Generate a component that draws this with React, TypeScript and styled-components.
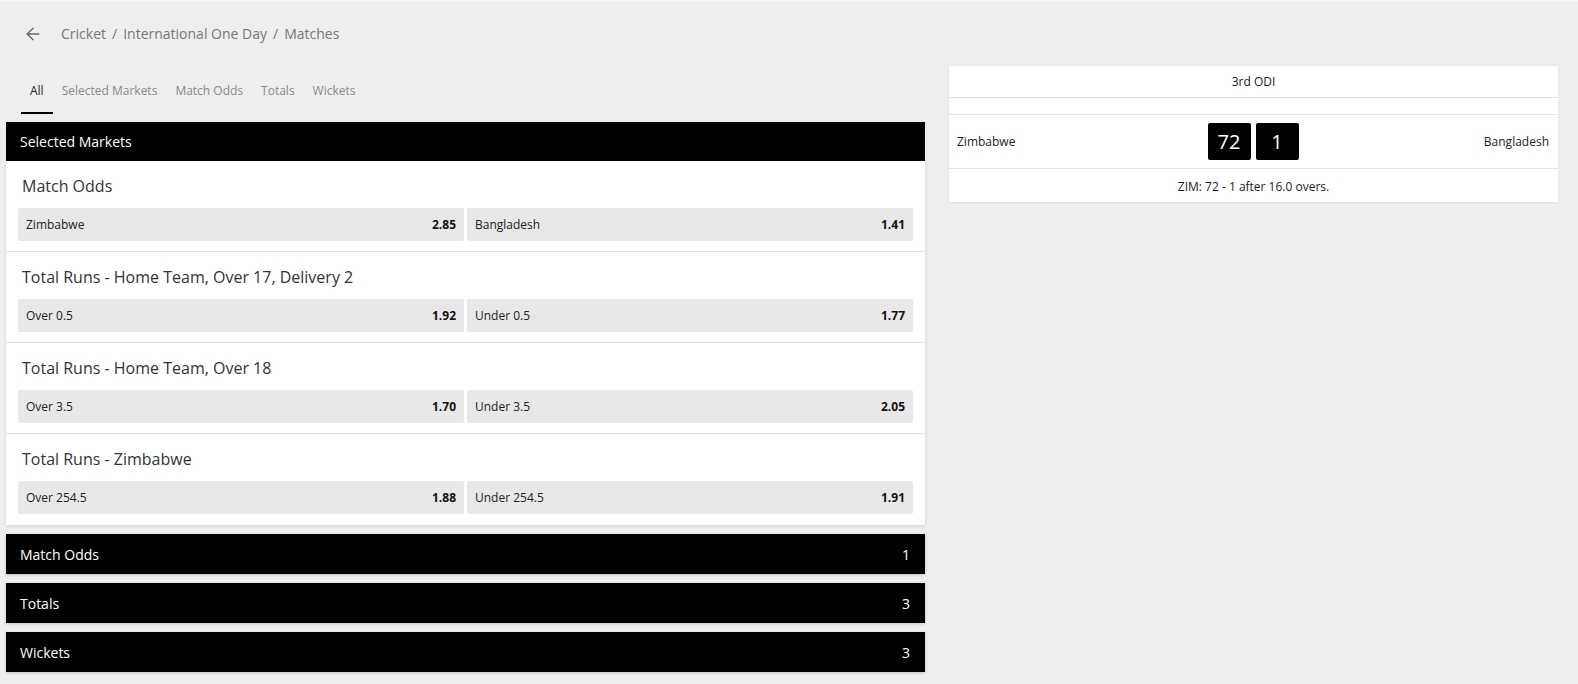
import React from "react";
import styled, { createGlobalStyle } from "styled-components";
import { ArrowLeft } from "lucide-react";

type Selection = { label: string; odds: string };
type Market = { title: string; selections: Selection[] };

const markets: Market[] = [
    { title: "Match Odds", selections: [{ label: "Zimbabwe", odds: "2.85" }, { label: "Bangladesh", odds: "1.41" }] },
    { title: "Total Runs - Home Team, Over 17, Delivery 2", selections: [{ label: "Over 0.5", odds: "1.92" }, { label: "Under 0.5", odds: "1.77" }] },
    { title: "Total Runs - Home Team, Over 18", selections: [{ label: "Over 3.5", odds: "1.70" }, { label: "Under 3.5", odds: "2.05" }] },
    { title: "Total Runs - Zimbabwe", selections: [{ label: "Over 254.5", odds: "1.88" }, { label: "Under 254.5", odds: "1.91" }] },
];

const groups = [
    { name: "Match Odds", count: 1 },
    { name: "Totals", count: 3 },
    { name: "Wickets", count: 3 },
];

const tabs = ["All", "Selected Markets", "Match Odds", "Totals", "Wickets"];
const crumbs = ["Cricket", "International One Day", "Matches"];

const GlobalStyle = createGlobalStyle`
    html, body {
        margin: 0;
        padding: 0;
        background: #eeeeee;
        font-family: "Open Sans", "Noto Sans", sans-serif;
    }
    * { box-sizing: border-box; }
`;

const App = () => {
    return (
        <Page>
            <GlobalStyle />
            <Breadcrumb>
                <BackButton><ArrowLeft size={20} strokeWidth={1.6} /></BackButton>
                {crumbs.map((c, i) => (
                    <React.Fragment key={c}>
                        {i > 0 && <Separator>/</Separator>}
                        <span>{c}</span>
                    </React.Fragment>
                ))}
            </Breadcrumb>
            <Columns>
                <LeftColumn>
                    <Tabs>
                        {tabs.map((t, i) => <Tab key={t} active={i === 0}>{t}</Tab>)}
                    </Tabs>
                    <BlackHeader>
                        <span>Selected Markets</span>
                    </BlackHeader>
                    <Card>
                        {markets.map(m => (
                            <MarketBlock key={m.title}>
                                <MarketTitle>{m.title}</MarketTitle>
                                <OddsRow>
                                    {m.selections.map(s => (
                                        <OddsButton key={s.label}>
                                            <span>{s.label}</span>
                                            <OddsValue>{s.odds}</OddsValue>
                                        </OddsButton>
                                    ))}
                                </OddsRow>
                            </MarketBlock>
                        ))}
                    </Card>
                    {groups.map(g => (
                        <GroupHeader key={g.name}>
                            <span>{g.name}</span>
                            <span>{g.count}</span>
                        </GroupHeader>
                    ))}
                </LeftColumn>
                <Scoreboard>
                    <ScoreTitle>3rd ODI</ScoreTitle>
                    <Spacer />
                    <TeamsRow>
                        <Team>Zimbabwe</Team>
                        <Scores>
                            <ScoreBox>72</ScoreBox>
                            <ScoreBox>1</ScoreBox>
                        </Scores>
                        <Team right>Bangladesh</Team>
                    </TeamsRow>
                    <ScoreStatus>ZIM: 72 - 1 after 16.0 overs.</ScoreStatus>
                </Scoreboard>
            </Columns>
        </Page>
    );
};

const Page = styled.div`
    border-top: 1px solid #f6f6f6;
    padding-bottom: 8px;
`;
const Breadcrumb = styled.div`
    display: flex;
    align-items: center;
    height: 65px;
    padding-left: 23px;
    font-size: 14px;
    color: #777;
`;
const BackButton = styled.div`
    display: flex;
    color: #666;
    width: 38px;
`;
const Separator = styled.span`
    padding: 0 6px;
`;
const Columns = styled.div`
    display: flex;
    align-items: flex-start;
    gap: 24px;
    padding-left: 6px;
`;
const LeftColumn = styled.div`
    display: flex;
    flex-direction: column;
    width: 919px;
    flex-shrink: 0;
`;
const Tabs = styled.div`
    display: flex;
    height: 56px;
    padding-left: 15px;
`;
const Tab = styled.div<{ active?: boolean }>`
    font-size: 12px;
    color: ${p => (p.active ? "#222" : "#8a8a8a")};
    padding: 16px 9px 0;
    height: 48px;
    border-bottom: 2px solid ${p => (p.active ? "#000" : "transparent")};
`;
const BlackHeader = styled.div`
    background: #000;
    color: #fff;
    height: 39px;
    display: flex;
    align-items: center;
    padding: 0 14px;
    font-size: 14px;
`;
const Card = styled.div`
    background: #fff;
    padding-bottom: 1px;
    box-shadow: 0 1px 3px rgba(0, 0, 0, 0.12);
`;
const MarketBlock = styled.div`
    padding: 13px 12px 10px;
    & + & {
        border-top: 1px solid #e2e2e2;
    }
`;
const MarketTitle = styled.div`
    font-size: 16px;
    color: #333;
    padding-left: 4px;
    height: 34px;
    line-height: 24px;
`;
const OddsRow = styled.div`
    display: grid;
    grid-template-columns: 1fr 1fr;
    gap: 3px;
`;
const OddsButton = styled.div`
    background: #e8e8e8;
    border-radius: 2px;
    height: 33px;
    display: flex;
    align-items: center;
    justify-content: space-between;
    padding: 0 8px;
    font-size: 12px;
    color: #222;
`;
const OddsValue = styled.span`
    font-weight: 700;
    color: #111;
`;
const GroupHeader = styled.div`
    background: #000;
    color: #fff;
    height: 40px;
    margin-top: 9px;
    display: flex;
    align-items: center;
    justify-content: space-between;
    padding: 0 15px 0 14px;
    font-size: 14px;
    box-shadow: 0 1px 3px rgba(0, 0, 0, 0.18);
`;
const Scoreboard = styled.div`
    width: 609px;
    flex-shrink: 0;
    background: #fff;
    box-shadow: 0 1px 2px rgba(0, 0, 0, 0.08);
    font-size: 12px;
    color: #222;
`;
const ScoreTitle = styled.div`
    height: 32px;
    display: flex;
    align-items: center;
    justify-content: center;
    border-bottom: 1px solid #e4e4e4;
`;
const Spacer = styled.div`
    height: 17px;
    border-bottom: 1px solid #e4e4e4;
`;
const TeamsRow = styled.div`
    display: grid;
    grid-template-columns: 1fr auto 1fr;
    align-items: center;
    height: 54px;
    padding: 0 9px 0 8px;
    border-bottom: 1px solid #e4e4e4;
`;
const Team = styled.div<{ right?: boolean }>`
    text-align: ${p => (p.right ? "right" : "left")};
`;
const Scores = styled.div`
    display: flex;
    gap: 5px;
`;
const ScoreBox = styled.div`
    background: #000;
    color: #fff;
    width: 43px;
    height: 37px;
    border-radius: 2px;
    display: flex;
    align-items: center;
    justify-content: center;
    font-size: 20px;
`;
const ScoreStatus = styled.div`
    height: 33px;
    padding-top: 2px;
    display: flex;
    align-items: center;
    justify-content: center;
`;

export default App;
